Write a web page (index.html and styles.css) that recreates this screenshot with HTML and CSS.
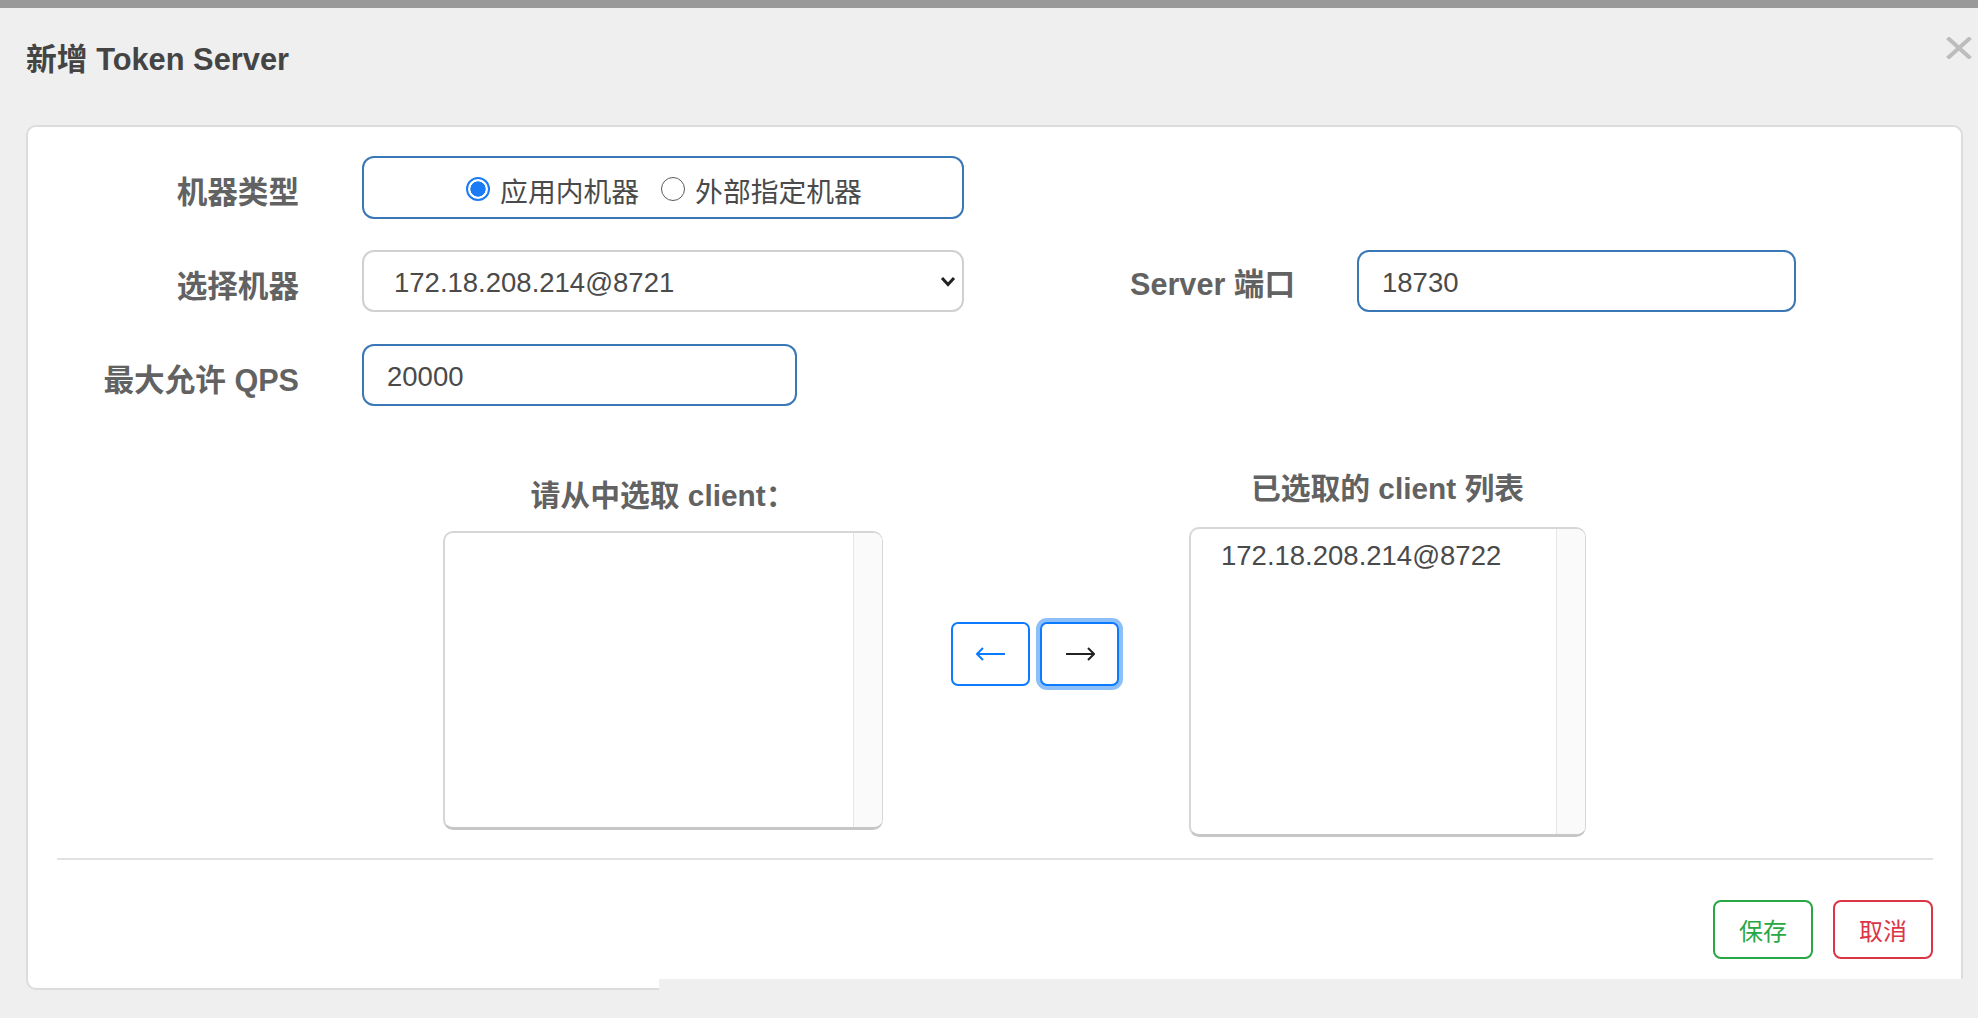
FILE: index.html
```html
<!DOCTYPE html>
<html lang="zh-CN">
<head>
<meta charset="utf-8">
<title>新增 Token Server</title>
<link rel="stylesheet" href="styles.css">
</head>
<body>
<div class="topbar"></div>
<header class="header">
  <h1 class="title">新增 Token Server</h1>
  <svg class="close" width="26" height="22" viewBox="0 0 26 22"><path d="M3 2 L23 20 M23 2 L3 20" stroke="#bdbdbd" stroke-width="4" stroke-linecap="square"/></svg>
</header>
<main class="panel">
  <div class="row">
    <div class="lbl">机器类型</div>
    <div class="radio-box">
      <label class="radio"><span class="dot checked"></span><span class="rtext">应用内机器</span></label>
      <label class="radio"><span class="dot"></span><span class="rtext">外部指定机器</span></label>
    </div>
  </div>
  <div class="row">
    <div class="lbl">选择机器</div>
    <div class="select">
      <span class="val">172.18.208.214@8721</span>
      <svg width="16" height="11" viewBox="0 0 16 11"><path d="M2 2 L8 8.5 L14 2" fill="none" stroke="#222" stroke-width="3"/></svg>
    </div>
    <div class="lbl lbl2">Server 端口</div>
    <div class="input port"><span class="val">18730</span></div>
  </div>
  <div class="row">
    <div class="lbl">最大允许 QPS</div>
    <div class="input qps"><span class="val">20000</span></div>
  </div>

  <section class="transfer">
    <div class="col col-left">
      <div class="col-title">请从中选取 client：</div>
      <div class="listbox left-box"><div class="items"></div><div class="scroll"></div></div>
    </div>
    <div class="arrows">
      <button class="arrow-btn"><svg width="30" height="14" viewBox="0 0 30 14"><path d="M1 7 H29 M7 1 L1 7 L7 13" fill="none" stroke="#0d7bff" stroke-width="2"/></svg></button>
      <button class="arrow-btn focused"><svg width="30" height="14" viewBox="0 0 30 14"><path d="M1 7 H29 M23 1 L29 7 L23 13" fill="none" stroke="#222" stroke-width="2"/></svg></button>
    </div>
    <div class="col col-right">
      <div class="col-title">已选取的 client 列表</div>
      <div class="listbox right-box"><div class="items"><div class="item">172.18.208.214@8722</div></div><div class="scroll"></div></div>
    </div>
  </section>

  <hr class="divider">
  <div class="footer">
    <button class="btn save">保存</button>
    <button class="btn cancel">取消</button>
  </div>
</main>
<div class="cover"></div>
</body>
</html>
```
FILE: styles.css
```css
* { box-sizing: border-box; }
html, body { margin: 0; padding: 0; }
body {
  width: 1978px;
  height: 1018px;
  overflow: hidden;
  background: #efefef;
  font-family: "Liberation Sans", "Noto Sans CJK SC", sans-serif;
  position: relative;
}
.topbar { height: 8px; background: #999; }
.header {
  display: flex;
  justify-content: space-between;
  align-items: flex-start;
  padding: 34px 6px 0 26px;
  height: 117px;
}
.title {
  margin: 0;
  font-size: 30.8px;
  line-height: 36px;
  font-weight: bold;
  color: #444;
}
.close { margin-top: -5px; }
.panel {
  margin-left: 26px;
  width: 1937px;
  height: 865px;
  background: #fff;
  border: 2px solid #dcdcdc;
  border-radius: 10px;
  padding-top: 29px;
}
.row {
  display: flex;
  align-items: center;
  height: 62px;
  margin-bottom: 32px;
}
.lbl {
  width: 271px;
  margin-right: 63px;
  padding-top: 9px;
  text-align: right;
  font-size: 30.6px;
  line-height: 36px;
  font-weight: bold;
  color: #626262;
}
.lbl2 { width: 331px; margin-right: 62px; padding-top: 5px; }
.radio-box {
  width: 602px;
  height: 63px;
  border: 2px solid #3a77b6;
  border-radius: 12px;
  display: flex;
  justify-content: center;
  align-items: center;
  gap: 22px;
  padding-left: 2px;
}
.radio {
  display: flex;
  align-items: center;
  gap: 10px;
  font-size: 27.8px;
  line-height: 34px;
  color: #4a4a4a;
}
.rtext { padding-top: 12px; }
.dot {
  width: 24px;
  height: 24px;
  border-radius: 50%;
  border: 1.5px solid #5a5a5a;
  background: #fff;
  margin-top: 4px;
}
.dot.checked {
  border: 2px solid #1a7cf5;
  background: radial-gradient(circle, #1a7cf5 0 52%, #fff 56%);
}
.select {
  width: 602px;
  height: 62px;
  border: 2px solid #d0d0d0;
  border-radius: 12px;
  display: flex;
  align-items: center;
  justify-content: space-between;
  padding: 0 6px 0 30px;
  font-size: 27.5px;
  color: #4a4a4a;
}
.val { padding-top: 3px; }
.input {
  height: 62px;
  border: 2px solid #3a77b6;
  border-radius: 12px;
  display: flex;
  align-items: center;
  padding-left: 23px;
  font-size: 27.5px;
  color: #4a4a4a;
}
.port { width: 439px; }
.qps { width: 435px; }
.transfer {
  display: flex;
  align-items: center;
  margin-top: 65px;
  padding-left: 415px;
}
.col-title {
  text-align: center;
  font-size: 29.8px;
  line-height: 36px;
  font-weight: bold;
  color: #626262;
}
.col-left .col-title { margin-bottom: 17px; }
.col-right .col-title { margin-bottom: 20px; }
.listbox {
  display: flex;
  border: 2px solid #d6d6d6;
  border-bottom: 3px solid #c6c6c6;
  border-right: 1px solid #d6d6d6;
  border-radius: 10px;
  overflow: hidden;
}
.left-box { width: 440px; height: 299px; }
.right-box { width: 397px; height: 310px; }
.items { flex: 1; padding: 12px 0 0 30px; }
.item { font-size: 27.5px; line-height: 30px; color: #4a4a4a; }
.scroll {
  width: 29px;
  background: #fafafa;
  border-left: 1px solid #e6e6e6;
}
.arrows {
  display: flex;
  gap: 10px;
  margin: 0 70px 0 68px;
}
.arrow-btn {
  width: 79px;
  height: 64px;
  background: #fff;
  border: 2px solid #0d7bff;
  border-radius: 7px;
  display: flex;
  align-items: center;
  justify-content: center;
  padding: 0;
}
.arrow-btn.focused { box-shadow: 0 0 0 4px #8dbff9; }
.divider {
  margin: 21px 28px 0 29px;
  border: 0;
  height: 2px;
  background: #e2e2e2;
}
.footer {
  display: flex;
  justify-content: flex-end;
  gap: 20px;
  padding: 40px 28px 0 0;
}
.btn {
  width: 100px;
  height: 59px;
  background: #fff;
  border-radius: 8px;
  font-family: "Liberation Sans", "Noto Sans CJK SC", sans-serif;
  font-size: 24px;
  padding: 0;
}
.save { border: 2px solid #28a745; color: #28a745; }
.cancel { border: 2px solid #dc3545; color: #dc3545; }
.cover {
  position: absolute;
  left: 659px;
  top: 979px;
  right: 0;
  bottom: 0;
  background: #efefef;
}
```
